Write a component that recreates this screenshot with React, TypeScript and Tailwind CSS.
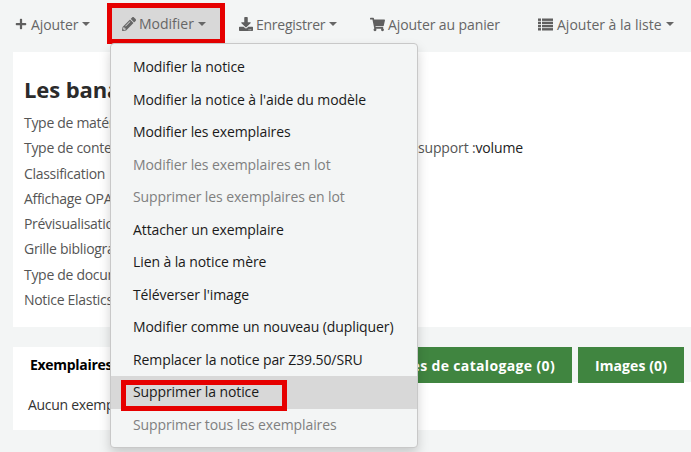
import React from "react";
import { FaPlus, FaPencilAlt, FaDownload, FaShoppingCart } from "react-icons/fa";

function Caret() {
  return <span className="ml-[4px] inline-block w-0 h-0 border-x-[4px] border-x-transparent border-t-[4px] border-t-[#666]" />;
}

function ListIcon() {
  return (
    <svg width="15" height="13" viewBox="0 0 15 13" fill="#5f5f5f" className="mr-[4px]">
      <rect x="0" y="0.5" width="3" height="2.4" />
      <rect x="0" y="3.7" width="3" height="2.4" />
      <rect x="0" y="6.9" width="3" height="2.4" />
      <rect x="0" y="10.1" width="3" height="2.4" />
      <rect x="4" y="0.5" width="11" height="2.4" />
      <rect x="4" y="3.7" width="11" height="2.4" />
      <rect x="4" y="6.9" width="11" height="2.4" />
      <rect x="4" y="10.1" width="11" height="2.4" />
    </svg>
  );
}

const rows = [
  ["Type de matériel", ""],
  ["Type de contenu", "support :"],
  ["Classification", ""],
  ["Affichage OPAC", ""],
  ["Prévisualisation", ""],
  ["Grille bibliographique", ""],
  ["Type de document", ""],
  ["Notice Elasticsearch", ""],
];

const items: [string, boolean][] = [
  ["Modifier la notice", false],
  ["Modifier la notice à l'aide du modèle", false],
  ["Modifier les exemplaires", false],
  ["Modifier les exemplaires en lot", true],
  ["Supprimer les exemplaires en lot", true],
  ["Attacher un exemplaire", false],
  ["Lien à la notice mère", false],
  ["Téléverser l'image", false],
  ["Modifier comme un nouveau (dupliquer)", false],
  ["Remplacer la notice par Z39.50/SRU", false],
  ["Supprimer la notice", false],
  ["Supprimer tous les exemplaires", true],
];

export default function App() {
  return (
    <div
      className="relative w-[691px] h-[452px] overflow-hidden bg-[#f3f5f5] text-[14px] text-[#1a1a1a]"
      style={{ fontFamily: '"Open Sans", "Noto Sans", sans-serif' }}
    >
      {/* toolbar */}
      <div className="h-[52px] flex items-start pl-[15px] text-[#666]">
        <div className="h-[48px] flex items-center w-[92px] tracking-[-0.1px]">
          <FaPlus className="text-[12px] text-[#5f5f5f] mr-[4px]" />
          Ajouter
          <Caret />
        </div>
        <div className="mt-[3px] w-[118px] h-[41px] bg-[#d8d8d8] border-[5px] border-[#e60000] flex items-center pl-[10px]">
          <FaPencilAlt className="text-[14px] text-[#666] mr-[3px]" />
          Modifier
          <Caret />
        </div>
        <div className="h-[48px] flex items-center ml-[14px] w-[131px] tracking-[-0.25px]">
          <FaDownload className="text-[14px] text-[#5f5f5f] mr-[3px]" />
          Enregistrer
          <Caret />
        </div>
        <div className="h-[48px] flex items-center w-[168px] tracking-[-0.1px]">
          <FaShoppingCart className="text-[15px] text-[#5f5f5f] mr-[3px]" />
          Ajouter au panier
        </div>
        <div className="h-[48px] flex items-center tracking-[0px]">
          <ListIcon />
          Ajouter à la liste
          <Caret />
        </div>
      </div>

      {/* notice panel */}
      <div className="ml-[13px] h-[275px] bg-white pl-[11px] pt-[22px]">
        <h1 className="text-[22px] leading-[30px] font-bold text-[#2b2b2b] tracking-[-0.1px]">Les bananes</h1>
        <div className="mt-[6px] text-[#555] tracking-[-0.3px]">
          {rows.map(([label, value]) => (
            <div key={label} className="h-[25.3px] leading-[25.3px] flex whitespace-nowrap">
              <span className="w-[394px] shrink-0">{label}</span>
              {value && (
                <span className="tracking-[-0.15px]">
                  {value}
                  <span className="text-[#222]">volume</span>
                </span>
              )}
            </div>
          ))}
        </div>
      </div>

      {/* tabs panel */}
      <div className="ml-[13px] mt-[20px]">
        <div className="h-[35px] flex font-bold">
          <div className="w-[130px] pl-[17px] flex items-center bg-white text-black tracking-[-0.3px]">Exemplaires (0)</div>
          <div className="w-[429px] h-[36px] pr-[17px] flex items-center justify-end bg-[#408540] text-white mr-[6px] whitespace-nowrap tracking-[0.35px]">
            Notices de catalogage (0)
          </div>
          <div className="w-[106px] h-[36px] flex items-center justify-center bg-[#408540] text-white tracking-[0.1px]">Images (0)</div>
        </div>
        <div className="h-[48px] bg-white pl-[15px] pt-[12px] text-[#333] tracking-[-0.3px]">Aucun exemplaire</div>
      </div>

      {/* dropdown */}
      <div className="absolute left-[110px] top-[43px] w-[308px] h-[405px] bg-[#f3f5f5] border border-[#c8c8c8] rounded-[4px] shadow-[0_6px_12px_rgba(0,0,0,0.175)] pt-[7px] tracking-[-0.1px]">
        {items.map(([label, muted]) => (
          <div
            key={label}
            className={
              "relative h-[32.5px] leading-[32.5px] pl-[22px] whitespace-nowrap " +
              (muted ? "text-[#808080] " : "text-[#1a1a1a] ") +
              (label === "Supprimer la notice" ? "bg-[#d8d8d8]" : "")
            }
          >
            {label}
            {label === "Supprimer la notice" && (
              <div className="absolute left-[10px] top-[4px] w-[166px] h-[31px] border-[5px] border-[#e60000]" />
            )}
          </div>
        ))}
      </div>
    </div>
  );
}
